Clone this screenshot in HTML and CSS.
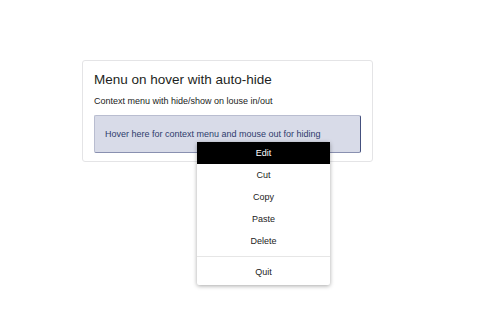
FILE: index.html
```html
<!DOCTYPE html>
<html>
<head>
<meta charset="utf-8">
<link rel="stylesheet" href="styles.css">
</head>
<body>
<div class="page">
  <div class="card">
    <h1 class="card-title">Menu on hover with auto-hide</h1>
    <p class="card-text">Context menu with hide/show on louse in/out</p>
    <div class="hover-box">
      Hover here for context menu and mouse out for hiding
      <ul class="context-menu">
        <li class="item active">Edit</li>
        <li class="item">Cut</li>
        <li class="item">Copy</li>
        <li class="item">Paste</li>
        <li class="item">Delete</li>
        <li class="separator"></li>
        <li class="item">Quit</li>
      </ul>
    </div>
  </div>
</div>
</body>
</html>
```

FILE: styles.css
```css
html, body {
  margin: 0;
  padding: 0;
  background: #ffffff;
}
body {
  font-family: "Liberation Sans", Arial, sans-serif;
  color: #212529;
}
.page {
  box-sizing: border-box;
  height: 309px;
  padding: 60px 0 0 82px;
}
.card {
  width: 291px;
  box-sizing: border-box;
  border: 1px solid #e4e4e6;
  border-radius: 3px;
  padding: 11px 11px 8px 11px;
  background: #fff;
}
.card-title {
  margin: 0 0 7px 0;
  font-size: 13.5px;
  font-weight: 400;
  line-height: 16px;
  color: #1d1f22;
}
.card-text {
  margin: 0 0 7px 0;
  font-size: 9px;
  line-height: 13px;
  color: #222;
}
.hover-box {
  position: relative;
  box-sizing: border-box;
  height: 38px;
  padding: 12px 10px;
  font-size: 9px;
  line-height: 13px;
  color: #2f3c6c;
  background: #d8dbe8;
  border: 1px solid #b9bdd0;
  border-right-color: #44507e;
  border-bottom-color: #8990b0;
  border-radius: 2px;
}
.context-menu {
  position: absolute;
  left: 102px;
  top: 26px;
  z-index: 10;
  width: 133px;
  margin: 0;
  padding: 0 0 2px 0;
  list-style: none;
  background: #fff;
  box-shadow: 0 1px 4px rgba(0, 0, 0, 0.35);
  border-radius: 2px;
  color: #222;
}
.item {
  height: 22px;
  line-height: 22px;
  text-align: center;
  font-size: 9px;
}
.item.active {
  background: #000;
  color: #fff;
}
.separator {
  height: 1px;
  margin: 4px 0 4px 0;
  background: #e6e6e6;
}
```
